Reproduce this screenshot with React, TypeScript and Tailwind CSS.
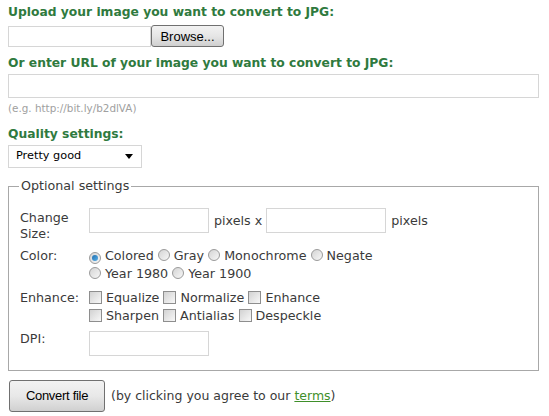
import React from "react"

const Radio = ({ checked = false }: { checked?: boolean }) => (
    <span className="inline-flex w-[12px] h-[12px] rounded-full border border-[#9a9a9a] bg-gradient-to-br from-[#d4d4d4] to-[#f7f7f7] items-center justify-center mr-[4px] align-[-1px]">
        {checked && <span className="w-[6px] h-[6px] rounded-full bg-gradient-to-br from-[#1d6fb0] to-[#5ab0e8]" />}
    </span>
)

const Check = () => (
    <span className="inline-block w-[13px] h-[13px] border border-[#8e8e8e] bg-gradient-to-br from-[#d2d2d2] to-[#f8f8f8] mr-[4px] align-[-2px]" />
)

const Field = ({ w }: { w: string }) => <div className={`${w} h-[25px] border border-[#d6d6d6] bg-white shrink-0`} />

export default function App() {
    return (
        <div className="w-[549px] h-[416px] bg-white px-2 pt-[4px] font-['DejaVu_Sans',Verdana,sans-serif] text-[12.7px] text-[#3a3a3a]">
            <h3 className="text-[12.3px] font-bold text-[#2f7a3e] leading-[16px]">Upload your image you want to convert to JPG:</h3>
            <div className="flex items-center mt-[5px] h-[22px]">
                <div className="w-[143px] h-[21px] border border-[#d6d6d6]" />
                <button className="w-[73px] h-[22px] border border-[#707070] rounded-[3px] bg-gradient-to-b from-[#f2f2f2] via-[#e6e6e6] to-[#cfcfcf] font-['Liberation_Sans',Arial,sans-serif] text-[13px] text-black leading-none">
                    Browse...
                </button>
            </div>

            <h3 className="text-[12.3px] font-bold text-[#2f7a3e] leading-[16px] mt-[8px]">Or enter URL of your image you want to convert to JPG:</h3>
            <div className="w-[531px] h-[24px] border border-[#d6d6d6] mt-[3px]" />
            <p className="text-[10.4px] text-[#a0a0a0] mt-[3px] leading-[14px]">(e.g. http://bit.ly/b2dlVA)</p>

            <h3 className="text-[12.3px] font-bold text-[#2f7a3e] leading-[16px] mt-[11px]">Quality settings:</h3>
            <div className="w-[134px] h-[23px] border border-[#d6d6d6] mt-[3px] flex items-center justify-between pl-[7px] pr-[8px] text-[11.3px] text-black">
                <span>Pretty good</span>
                <svg width="8" height="5" viewBox="0 0 8 5"><path d="M0 0h8L4 5z" fill="#000" /></svg>
            </div>

            <fieldset className="w-[531px] border border-[#a8a8a8] mt-[10px] pl-[11px] pr-2 pb-[14px] pt-[14px]">
                <legend className="px-[2px] ml-[-1px] leading-[16px]">Optional settings</legend>
                <div className="grid grid-cols-[69px_1fr]">
                    <div className="leading-[16px] pt-[2px]">Change<br />Size:</div>
                    <div className="flex items-start gap-[4px]">
                        <Field w="w-[120px]" />
                        <span className="leading-[25px] ml-[1px]">pixels x</span>
                        <Field w="w-[120px]" />
                        <span className="leading-[25px] ml-[1px]">pixels</span>
                    </div>

                    <div className="leading-[18px] mt-[5px]">Color:</div>
                    <div className="leading-[18px] mt-[5px]">
                        <div><Radio checked />Colored <Radio />Gray <Radio />Monochrome <Radio />Negate</div>
                        <div><Radio />Year 1980 <Radio />Year 1900</div>
                    </div>

                    <div className="leading-[18px] mt-[6px]">Enhance:</div>
                    <div className="leading-[18px] mt-[6px]">
                        <div><Check />Equalize <Check />Normalize <Check />Enhance</div>
                        <div><Check />Sharpen <Check />Antialias <Check />Despeckle</div>
                    </div>

                    <div className="leading-[16px] mt-[6px]">DPI:</div>
                    <div className="mt-[6px]"><Field w="w-[120px]" /></div>
                </div>
            </fieldset>

            <div className="flex items-center mt-[9px]">
                <button className="w-[96px] h-[32px] ml-[1px] border border-[#707070] rounded-[3px] bg-gradient-to-b from-[#f2f2f2] via-[#e8e8e8] to-[#d0d0d0] font-['Liberation_Sans',Arial,sans-serif] text-[13px] text-black tracking-[-0.3px]">
                    Convert file
                </button>
                <span className="ml-[6px] text-[12.5px]">
                    (by clicking you agree to our <a className="text-[#3f8f2a] underline">terms</a>)
                </span>
            </div>
        </div>
    )
}
